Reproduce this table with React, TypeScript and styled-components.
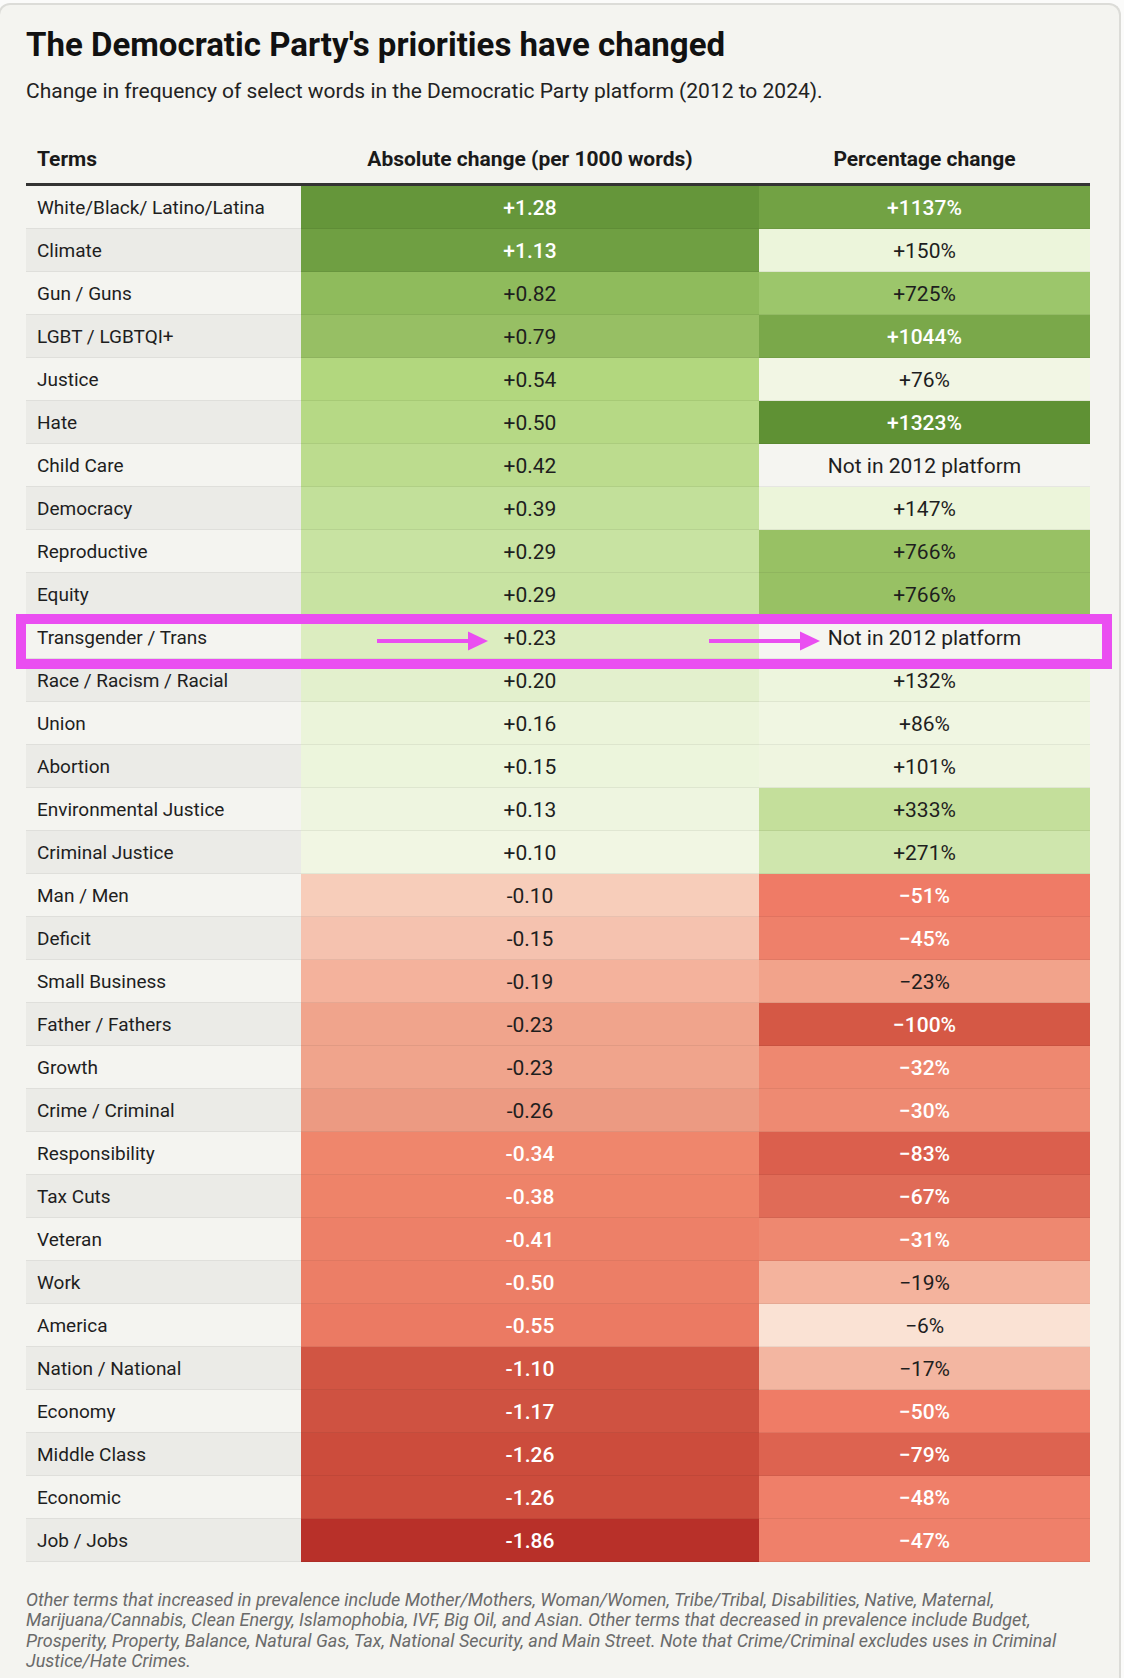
import React from "react";
import styled, { createGlobalStyle } from "styled-components";

const GlobalStyle = createGlobalStyle`
  html, body {
    margin: 0;
    padding: 0;
    background: #fbfbfa;
    font-family: Roboto, "Liberation Sans", Arial, sans-serif;
  }
  * { box-sizing: border-box; }
`;

type Row = {
  term: string;
  abs: string;
  absBg: string;
  absLight?: boolean;
  pct: string;
  pctBg: string;
  pctLight?: boolean;
};

const rows: Row[] = [
  { term: "White/Black/ Latino/Latina", abs: "+1.28", absBg: "#65963a", absLight: true, pct: "+1137%", pctBg: "#72a244", pctLight: true },
  { term: "Climate", abs: "+1.13", absBg: "#6f9f42", absLight: true, pct: "+150%", pctBg: "#ecf5db" },
  { term: "Gun / Guns", abs: "+0.82", absBg: "#8fbb5c", pct: "+725%", pctBg: "#9cc66b" },
  { term: "LGBT / LGBTQI+", abs: "+0.79", absBg: "#97bf64", pct: "+1044%", pctBg: "#7aa84a", pctLight: true },
  { term: "Justice", abs: "+0.54", absBg: "#b2d77e", pct: "+76%", pctBg: "#f2f6e4" },
  { term: "Hate", abs: "+0.50", absBg: "#b6d985", pct: "+1323%", pctBg: "#5f9134", pctLight: true },
  { term: "Child Care", abs: "+0.42", absBg: "#bcdc8e", pct: "Not in 2012 platform", pctBg: "#f5f5f1" },
  { term: "Democracy", abs: "+0.39", absBg: "#c2e09a", pct: "+147%", pctBg: "#ecf5da" },
  { term: "Reproductive", abs: "+0.29", absBg: "#c8e3a2", pct: "+766%", pctBg: "#98c164" },
  { term: "Equity", abs: "+0.29", absBg: "#c8e3a2", pct: "+766%", pctBg: "#98c164" },
  { term: "Transgender / Trans", abs: "+0.23", absBg: "#dcedc0", pct: "Not in 2012 platform", pctBg: "#f5f5f1" },
  { term: "Race / Racism / Racial", abs: "+0.20", absBg: "#e3f0cd", pct: "+132%", pctBg: "#edf5dd" },
  { term: "Union", abs: "+0.16", absBg: "#ebf4da", pct: "+86%", pctBg: "#f0f6e2" },
  { term: "Abortion", abs: "+0.15", absBg: "#ecf5dc", pct: "+101%", pctBg: "#eff5e0" },
  { term: "Environmental Justice", abs: "+0.13", absBg: "#eef5e0", pct: "+333%", pctBg: "#c4df9b" },
  { term: "Criminal Justice", abs: "+0.10", absBg: "#f1f6e3", pct: "+271%", pctBg: "#cfe6ad" },
  { term: "Man / Men", abs: "-0.10", absBg: "#f7cdba", pct: "\u221251%", pctBg: "#ef7b66", pctLight: true },
  { term: "Deficit", abs: "-0.15", absBg: "#f5c2af", pct: "\u221245%", pctBg: "#ee806a", pctLight: true },
  { term: "Small Business", abs: "-0.19", absBg: "#f4b29c", pct: "\u221223%", pctBg: "#f2a38b" },
  { term: "Father / Fathers", abs: "-0.23", absBg: "#f0a48c", pct: "\u2212100%", pctBg: "#d55845", pctLight: true },
  { term: "Growth", abs: "-0.23", absBg: "#f0a48c", pct: "\u221232%", pctBg: "#ee8870", pctLight: true },
  { term: "Crime / Criminal", abs: "-0.26", absBg: "#ec9a82", pct: "\u221230%", pctBg: "#ee8a72", pctLight: true },
  { term: "Responsibility", abs: "-0.34", absBg: "#ef866c", absLight: true, pct: "\u221283%", pctBg: "#db5f4d", pctLight: true },
  { term: "Tax Cuts", abs: "-0.38", absBg: "#ee8369", absLight: true, pct: "\u221267%", pctBg: "#e06b57", pctLight: true },
  { term: "Veteran", abs: "-0.41", absBg: "#ed8068", absLight: true, pct: "\u221231%", pctBg: "#ee8870", pctLight: true },
  { term: "Work", abs: "-0.50", absBg: "#ec7e66", absLight: true, pct: "\u221219%", pctBg: "#f4b39d" },
  { term: "America", abs: "-0.55", absBg: "#eb7a63", absLight: true, pct: "\u22126%", pctBg: "#fae2d4" },
  { term: "Nation / National", abs: "-1.10", absBg: "#d15543", absLight: true, pct: "\u221217%", pctBg: "#f3b6a1" },
  { term: "Economy", abs: "-1.17", absBg: "#cf5241", absLight: true, pct: "\u221250%", pctBg: "#ef7c66", pctLight: true },
  { term: "Middle Class", abs: "-1.26", absBg: "#cc4c3c", absLight: true, pct: "\u221279%", pctBg: "#dd6350", pctLight: true },
  { term: "Economic", abs: "-1.26", absBg: "#cc4c3c", absLight: true, pct: "\u221248%", pctBg: "#ef7f69", pctLight: true },
  { term: "Job / Jobs", abs: "-1.86", absBg: "#b83029", absLight: true, pct: "\u221247%", pctBg: "#ef806a", pctLight: true },
];

const COLS = "275px 458px 331px";
const ROW_H = 43;
const MAGENTA = "#ea4ef1";

const Card = styled.div`
  margin: 3px 3px 0 -2px;
  min-height: 1675px;
  background: #f4f4f0;
  border: 2px solid #dcdcd8;
  border-bottom: none;
  border-radius: 12px 12px 0 0;
  padding: 21px 29px 20px 26px;
  color: #222;
`;

const Title = styled.h1`
  margin: 0;
  font-size: 33px;
  line-height: 37px;
  font-weight: 700;
  color: #111;
`;

const Subtitle = styled.p`
  margin: 16px 0 0;
  font-size: 21px;
  line-height: 24px;
  color: #222;
`;

const Table = styled.div`
  margin-top: 34px;
  width: 1064px;
`;

const HeaderRow = styled.div`
  display: grid;
  grid-template-columns: ${COLS};
  padding: 10px 0 12px;
  border-bottom: 3px solid #333;
`;

const HeadCell = styled.div<{ $align?: "left" | "center" }>`
  font-size: 21px;
  line-height: 24px;
  font-weight: 700;
  color: #1a1a1a;
  text-align: ${(p) => p.$align ?? "center"};
  padding-left: ${(p) => (p.$align === "left" ? "11px" : "0")};
`;

const Body = styled.div`
  position: relative;
`;

const DataRow = styled.div`
  display: grid;
  grid-template-columns: ${COLS};
  height: ${ROW_H}px;
`;

const TermCell = styled.div<{ $alt: boolean }>`
  display: flex;
  align-items: center;
  padding-left: 11px;
  font-size: 19px;
  color: #1e1e1e;
  background: ${(p) => (p.$alt ? "#ebebe7" : "#f4f4f0")};
  border-bottom: 1px solid #dfdfdb;
`;

const ValueCell = styled.div<{ $bg: string; $light?: boolean }>`
  display: flex;
  align-items: center;
  justify-content: center;
  font-size: 21px;
  background: ${(p) => p.$bg};
  color: ${(p) => (p.$light ? "#ffffff" : "#1e1e1e")};
  font-weight: ${(p) => (p.$light ? 500 : 400)};
  box-shadow: inset 0 -1px 0 rgba(0, 0, 0, 0.06);
`;

const Highlight = styled.div<{ $row: number }>`
  position: absolute;
  left: -10px;
  top: ${(p) => p.$row * ROW_H - 2}px;
  width: 1096px;
  height: 55px;
  border: 10px solid ${MAGENTA};
  pointer-events: none;
`;

const ArrowMark = styled.svg<{ $x: number }>`
  position: absolute;
  left: ${(p) => p.$x}px;
  top: 7px;
`;

const Footnote = styled.p`
  margin: 28px 0 0;
  font-size: 18px;
  line-height: 20.3px;
  font-style: italic;
  color: #6a6a6a;
  width: 1064px;
`;

const Arrow: React.FC<{ x: number }> = ({ x }) => (
  <ArrowMark $x={x} width="112" height="20" viewBox="0 0 112 20">
    <line x1="0" y1="10" x2="93" y2="10" stroke={MAGENTA} strokeWidth="4" />
    <polygon points="91,0.5 111,10 91,19.5" fill={MAGENTA} />
  </ArrowMark>
);

export default function App() {
  return (
    <>
      <GlobalStyle />
      <Card>
        <Title>The Democratic Party's priorities have changed</Title>
        <Subtitle>
          Change in frequency of select words in the Democratic Party platform (2012 to 2024).
        </Subtitle>
        <Table>
          <HeaderRow>
            <HeadCell $align="left">Terms</HeadCell>
            <HeadCell>Absolute change (per 1000 words)</HeadCell>
            <HeadCell>Percentage change</HeadCell>
          </HeaderRow>
          <Body>
            {rows.map((r, i) => (
              <DataRow key={r.term}>
                <TermCell $alt={i % 2 === 1}>{r.term}</TermCell>
                <ValueCell $bg={r.absBg} $light={r.absLight}>{r.abs}</ValueCell>
                <ValueCell $bg={r.pctBg} $light={r.pctLight}>{r.pct}</ValueCell>
              </DataRow>
            ))}
            <Highlight $row={10}>
              <Arrow x={351} />
              <Arrow x={683} />
            </Highlight>
          </Body>
        </Table>
        <Footnote>
          Other terms that increased in prevalence include Mother/Mothers, Woman/Women, Tribe/Tribal,
          Disabilities, Native, Maternal, Marijuana/Cannabis, Clean Energy, Islamophobia, IVF, Big Oil,
          and Asian. Other terms that decreased in prevalence include Budget, Prosperity, Property,
          Balance, Natural Gas, Tax, National Security, and Main Street. Note that Crime/Criminal
          excludes uses in Criminal Justice/Hate Crimes.
        </Footnote>
      </Card>
    </>
  );
}
